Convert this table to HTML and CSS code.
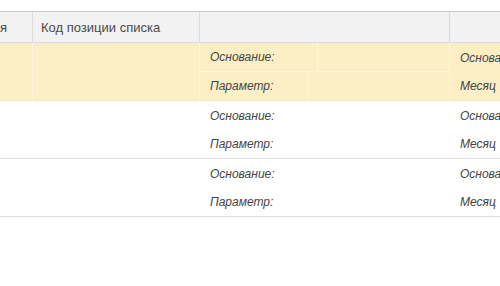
FILE: index.html
```html
<!DOCTYPE html>
<html lang="ru">
<head>
<meta charset="utf-8">
<link rel="stylesheet" href="styles.css">
</head>
<body>
<div class="table">
  <div class="head">
    <div class="hcell first">я</div>
    <div class="hcell">Код позиции списка</div>
    <div class="hcell"></div>
    <div class="hcell last"></div>
  </div>

  <div class="group current">
    <div class="cell span2"></div>
    <div class="cell span2"></div>
    <div class="sub"><span class="label w1">Основание:</span><span class="value"></span></div>
    <div class="cell tail">Основание</div>
    <div class="sub"><span class="label w2">Параметр:</span><span class="value"></span></div>
    <div class="cell tail">Месяц</div>
  </div>

  <div class="group">
    <div class="cell span2"></div>
    <div class="cell span2"></div>
    <div class="sub"><span class="label w1">Основание:</span><span class="value"></span></div>
    <div class="cell tail">Основание</div>
    <div class="sub"><span class="label w2">Параметр:</span><span class="value"></span></div>
    <div class="cell tail">Месяц</div>
  </div>

  <div class="group">
    <div class="cell span2"></div>
    <div class="cell span2"></div>
    <div class="sub"><span class="label w1">Основание:</span><span class="value"></span></div>
    <div class="cell tail">Основание</div>
    <div class="sub"><span class="label w2">Параметр:</span><span class="value"></span></div>
    <div class="cell tail">Месяц</div>
  </div>
</div>
</body>
</html>
```

FILE: styles.css
```css
html, body {
  margin: 0;
  padding: 0;
  background: #ffffff;
}

body {
  padding-top: 11px;
  font-family: "Liberation Sans", Arial, sans-serif;
  font-size: 12px;
  color: #444444;
  overflow: hidden;
}

.table {
  width: 520px;
}

.head {
  display: grid;
  grid-template-columns: 33px 167px 250px 70px;
  height: 30px;
  background: #f2f2f2;
  border-top: 1px solid #c9c9c9;
  border-bottom: 1px solid #dcdcdc;
  font-size: 13px;
}

.hcell {
  display: flex;
  align-items: center;
  padding-left: 8px;
  padding-top: 1px;
  border-right: 1px solid #d9d9d9;
  color: #4a4a4a;
  white-space: nowrap;
  overflow: hidden;
}

.hcell.first {
  padding-left: 0;
}

.hcell.last {
  border-right: none;
}

.group {
  display: grid;
  grid-template-columns: 33px 167px 250px 70px;
  grid-template-rows: 29px 28px;
  border-bottom: 1px solid #dedede;
}

.group.current {
  background: #fcefc6;
  border-bottom-color: #efe6cc;
}

.cell {
  display: flex;
  align-items: center;
  white-space: nowrap;
  overflow: hidden;
}

.span2 {
  grid-row: span 2;
}

.current .span2 {
  border-right: 1px solid #fdf5dc;
}

.sub {
  display: flex;
  align-items: stretch;
}

.current .sub:nth-of-type(3) {
  border-bottom: 1px solid #fdf5dc;
}

.label {
  display: flex;
  align-items: center;
  padding-left: 10px;
  font-style: italic;
  color: #444444;
  white-space: nowrap;
}

.label.w1 {
  width: 107px;
}

.label.w2 {
  width: 97px;
}

.value {
  flex: 1;
}

.current .value {
  border-left: 1px solid #fdf5dc;
  border-right: 1px solid #fdf5dc;
}

.tail {
  padding-left: 10px;
  font-style: italic;
  color: #444444;
}
```
